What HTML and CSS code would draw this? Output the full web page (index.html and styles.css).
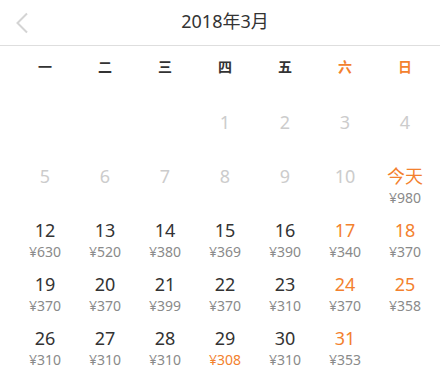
FILE: index.html
```html
<!DOCTYPE html>
<html lang="zh-CN">
<head>
<meta charset="utf-8">
<title>2018年3月</title>
<link rel="stylesheet" href="styles.css">
</head>
<body>
<div class="cal">
  <header class="head">
    <span class="back"><svg width="14" height="22" viewBox="0 0 14 22"><polyline points="12,1.5 2.5,11 12,20.5" fill="none" stroke="#d4d4d4" stroke-width="2"/></svg></span>
    <h1 class="title">2018年3月</h1>
    <span></span>
  </header>
  <div class="week">
    <span>一</span><span>二</span><span>三</span><span>四</span><span>五</span><span class="wk">六</span><span class="wk">日</span>
  </div>
  <div class="days">
    <div class="day"></div><div class="day"></div><div class="day"></div>
    <div class="day off"><span class="num">1</span></div>
    <div class="day off"><span class="num">2</span></div>
    <div class="day off"><span class="num">3</span></div>
    <div class="day off"><span class="num">4</span></div>
    <div class="day off"><span class="num">5</span></div>
    <div class="day off"><span class="num">6</span></div>
    <div class="day off"><span class="num">7</span></div>
    <div class="day off"><span class="num">8</span></div>
    <div class="day off"><span class="num">9</span></div>
    <div class="day off"><span class="num">10</span></div>
    <div class="day wk"><span class="num">今天</span><span class="price">¥980</span></div>
    <div class="day"><span class="num">12</span><span class="price">¥630</span></div>
    <div class="day"><span class="num">13</span><span class="price">¥520</span></div>
    <div class="day"><span class="num">14</span><span class="price">¥380</span></div>
    <div class="day"><span class="num">15</span><span class="price">¥369</span></div>
    <div class="day"><span class="num">16</span><span class="price">¥390</span></div>
    <div class="day wk"><span class="num">17</span><span class="price">¥340</span></div>
    <div class="day wk"><span class="num">18</span><span class="price">¥370</span></div>
    <div class="day"><span class="num">19</span><span class="price">¥370</span></div>
    <div class="day"><span class="num">20</span><span class="price">¥370</span></div>
    <div class="day"><span class="num">21</span><span class="price">¥399</span></div>
    <div class="day"><span class="num">22</span><span class="price">¥370</span></div>
    <div class="day"><span class="num">23</span><span class="price">¥310</span></div>
    <div class="day wk"><span class="num">24</span><span class="price">¥370</span></div>
    <div class="day wk"><span class="num">25</span><span class="price">¥358</span></div>
    <div class="day"><span class="num">26</span><span class="price">¥310</span></div>
    <div class="day"><span class="num">27</span><span class="price">¥310</span></div>
    <div class="day"><span class="num">28</span><span class="price">¥310</span></div>
    <div class="day"><span class="num">29</span><span class="price low">¥308</span></div>
    <div class="day"><span class="num">30</span><span class="price">¥310</span></div>
    <div class="day wk"><span class="num">31</span><span class="price">¥353</span></div>
  </div>
</div>
</body>
</html>
```
FILE: styles.css
```css
html, body {
  margin: 0;
  padding: 0;
  background: #fff;
}
body {
  font-family: "Noto Sans", "Noto Sans CJK SC", sans-serif;
  color: #333;
}
.head {
  display: grid;
  grid-template-columns: 1fr auto 1fr;
  align-items: center;
  height: 45px;
  padding: 0 5px 0 15px;
  border-bottom: 1px solid #dedede;
}
.back {
  display: flex;
  align-items: center;
}
.back svg {
  display: block;
}
.title {
  margin: 0 0 3px;
  font-size: 18px;
  font-weight: 400;
  color: #333;
  line-height: 24px;
}
.week {
  display: grid;
  grid-template-columns: repeat(7, 60px);
  padding: 0 5px 0 15px;
  height: 40px;
  align-items: center;
  text-align: center;
  font-size: 14px;
  font-weight: 700;
  color: #333;
}
.week .wk {
  color: #f3812e;
}
.days {
  display: grid;
  grid-template-columns: repeat(7, 60px);
  grid-auto-rows: 54px;
  padding: 11px 5px 0 15px;
}
.day {
  display: flex;
  flex-direction: column;
  align-items: center;
  padding-top: 13px;
}
.num {
  font-size: 18px;
  line-height: 24px;
  color: #333;
}
.price {
  font-size: 14px;
  line-height: 20px;
  color: #8a8a8a;
}
.day.wk .num {
  color: #f3812e;
}
.day.off .num {
  color: #cccccc;
}
.price.low {
  color: #f3812e;
}
```
